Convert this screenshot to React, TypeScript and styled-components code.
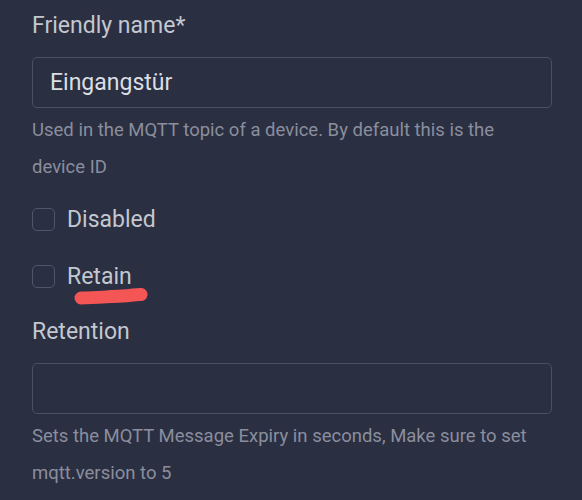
import React from "react";
import styled, { createGlobalStyle } from "styled-components";

const Global = createGlobalStyle`
  html, body {
    margin: 0;
    padding: 0;
    background: #2a2f42;
  }
  body {
    font-family: Roboto, "Noto Sans", sans-serif;
  }
`;

const Page = styled.div`
  width: 582px;
  height: 500px;
  box-sizing: border-box;
  padding: 10px 30px 0 32px;
  background: #2a2f42;
  overflow: hidden;
`;

const Label = styled.div<{ $top?: number }>`
  color: #c4c7cf;
  font-size: 23px;
  line-height: 32px;
  margin-top: ${(p) => p.$top ?? 0}px;
  margin-bottom: 15px;
`;

const Input = styled.input`
  display: block;
  box-sizing: border-box;
  width: 520px;
  height: 51px;
  margin: 0;
  padding: 0 17px;
  background: #2a2f42;
  border: 1px solid #4b5062;
  border-radius: 5px;
  color: #dcdee4;
  font-family: Roboto, "Noto Sans", sans-serif;
  font-size: 23px;
  outline: none;
`;

const Help = styled.div`
  color: #8a8e9d;
  font-size: 18.5px;
  line-height: 37px;
  margin-top: 3.5px;
`;

const CheckRow = styled.label<{ $top: number }>`
  position: relative;
  display: flex;
  align-items: center;
  gap: 12px;
  height: 40px;
  margin-top: ${(p) => p.$top}px;
  color: #c4c7cf;
  font-size: 23px;
`;

const Box = styled.span`
  box-sizing: border-box;
  width: 23px;
  height: 23px;
  border: 1.5px solid #50566a;
  border-radius: 5px;
`;

const Scribble = styled.svg`
  position: absolute;
  left: 0;
  top: 0;
  overflow: visible;
`;

export default function App() {
  return (
    <Page>
      <Global />
      <Label>Friendly name*</Label>
      <Input defaultValue="Eingangstür" />
      <Help>
        Used in the MQTT topic of a device. By default this is the
        <br />
        device ID
      </Help>
      <CheckRow $top={13.5}>
        <Box />
        Disabled
      </CheckRow>
      <CheckRow $top={17}>
        <Box />
        Retain
        <Scribble width="130" height="60" viewBox="0 0 130 60">
          <path
            d="M49 42 C 63 42, 77 40.5, 90 40 C 100 39.5, 105 38, 109 38.5"
            stroke="#f45656"
            strokeWidth="13"
            strokeLinecap="round"
            fill="none"
          />
        </Scribble>
      </CheckRow>
      <Label $top={20}>Retention</Label>
      <Input />
      <Help>
        Sets the MQTT Message Expiry in seconds, Make sure to set
        <br />
        mqtt.version to 5
      </Help>
    </Page>
  );
}
